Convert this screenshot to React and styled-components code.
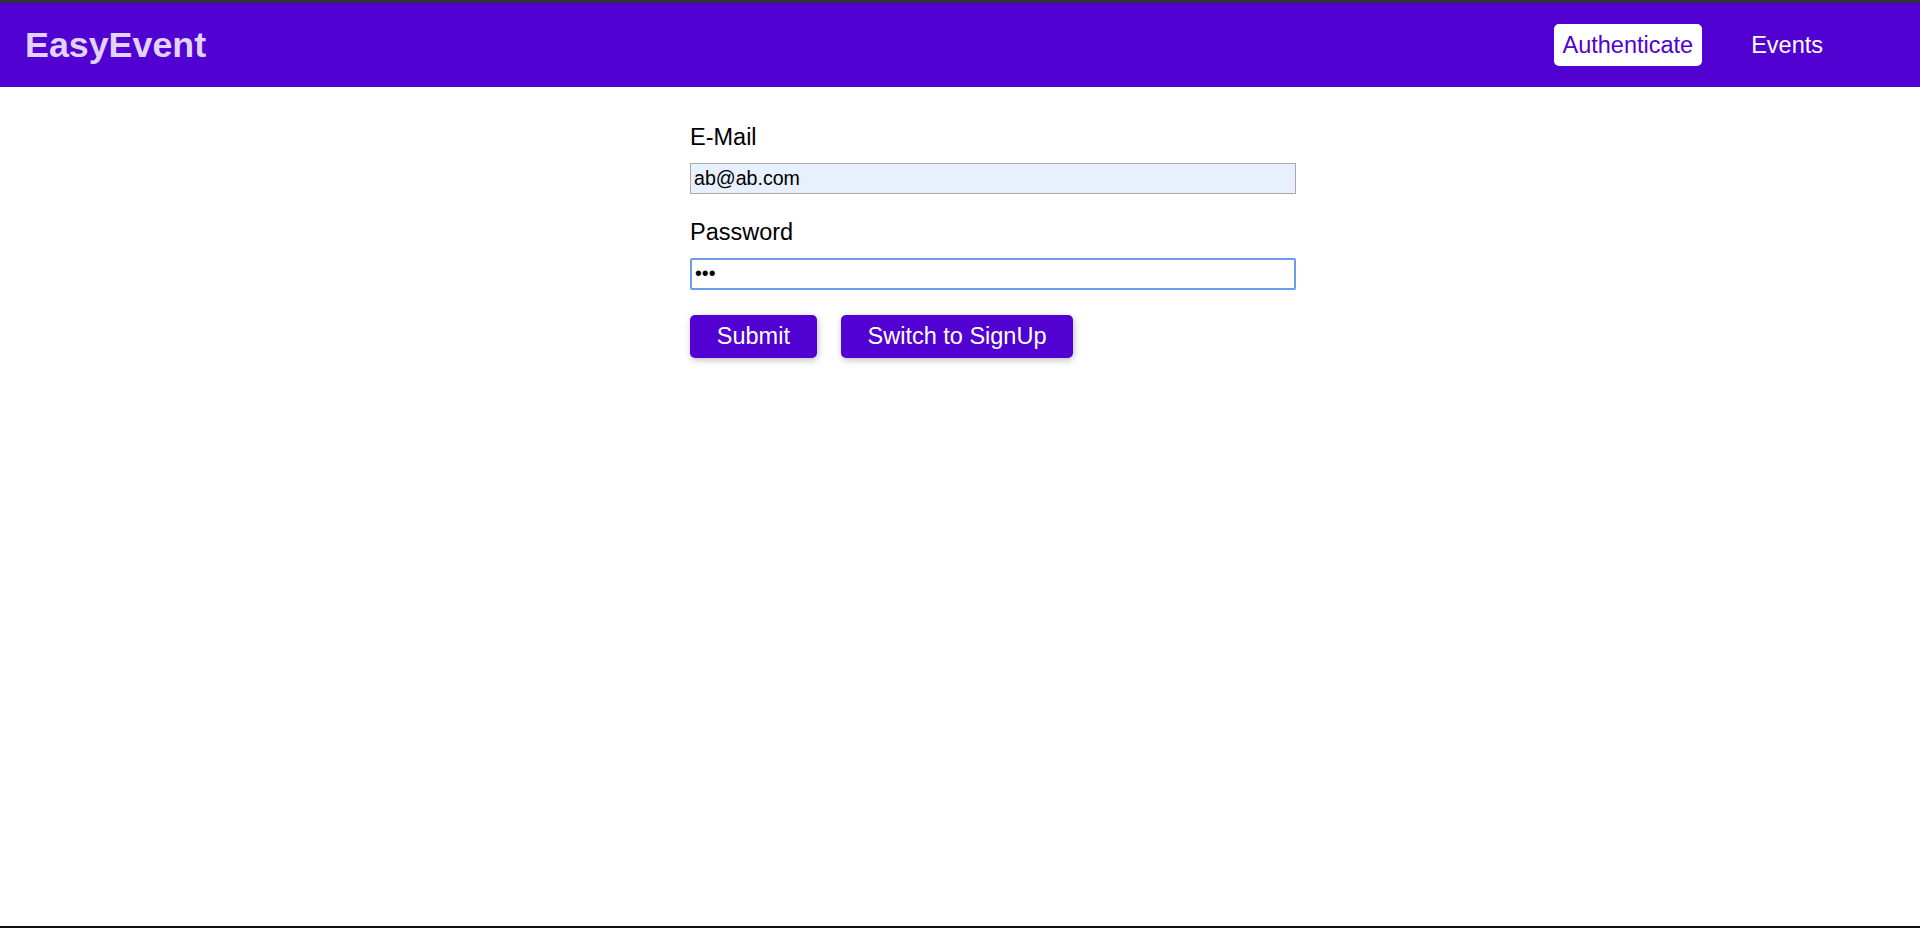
import React, { useState } from "react";
import styled, { createGlobalStyle } from "styled-components";

const GlobalStyle = createGlobalStyle`
  html, body {
    margin: 0;
    padding: 0;
    background: #ffffff;
    font-family: "Liberation Sans", Arial, sans-serif;
  }
  * { box-sizing: border-box; }
`;

const Page = styled.div`
  display: flex;
  flex-direction: column;
  min-height: 928px;
  border-top: 3px solid #333238;
  border-bottom: 2px solid #111111;
`;

const Navigation = styled.header`
  height: 84px;
  display: flex;
  align-items: center;
  justify-content: space-between;
  padding: 0 88px 0 25px;
  background: #5101d1;
`;

const Logo = styled.h1`
  margin: 0;
  font-size: 35.8px;
  font-weight: 700;
  color: #e1d3ff;
`;

const NavList = styled.ul`
  display: flex;
  align-items: center;
  gap: 40px;
  list-style: none;
  margin: 0;
  padding: 0;
`;

const NavLink = styled.a`
  display: block;
  padding: 7.5px 9px;
  border-radius: 5px;
  font-size: 23.5px;
  line-height: 27px;
  text-decoration: none;
  cursor: pointer;
  color: ${(p) => (p.$active ? "#5101d1" : "#ffffff")};
  background: ${(p) => (p.$active ? "#ffffff" : "transparent")};
`;

const Main = styled.main`
  flex: 1;
  padding-top: 37px;
`;

const AuthForm = styled.form`
  width: 606px;
  margin-left: calc(50% - 270px);
`;

const FormControl = styled.div`
  margin-bottom: 24.5px;
`;

const Label = styled.label`
  display: block;
  margin-bottom: 12px;
  font-size: 23.5px;
  line-height: 27px;
  color: #000000;
`;

const Input = styled.input`
  display: block;
  width: 100%;
  height: ${(p) => (p.$focused ? "32.5px" : "31px")};
  margin: 0;
  padding: 0 3px;
  font-family: "Liberation Sans", Arial, sans-serif;
  font-size: 19.6px;
  color: #000000;
  background: ${(p) => (p.$autofill ? "#e8f0fe" : "#ffffff")};
  border: ${(p) => (p.$focused ? "2px solid #6c9cec" : "1.2px solid #a9a9a9")};
  border-radius: ${(p) => (p.$focused ? "2px" : "0")};
  outline: none;
  caret-color: #000000;
`;

const Actions = styled.div`
  display: flex;
  gap: 24px;
`;

const Button = styled.button`
  height: 43px;
  padding: 0 26.8px;
  border: none;
  border-radius: 5px;
  background: #5101d1;
  color: #ffffff;
  font-family: "Liberation Sans", Arial, sans-serif;
  font-size: 23.5px;
  cursor: pointer;
  box-shadow: 1px 2px 7px rgba(0, 0, 0, 0.26);
`;

export default function App() {
  const [email, setEmail] = useState("ab@ab.com");
  const [password, setPassword] = useState("abc");

  return (
    <>
      <GlobalStyle />
      <Page>
        <Navigation>
          <Logo>EasyEvent</Logo>
          <nav>
            <NavList>
              <li>
                <NavLink $active>Authenticate</NavLink>
              </li>
              <li>
                <NavLink>Events</NavLink>
              </li>
            </NavList>
          </nav>
        </Navigation>
        <Main>
          <AuthForm onSubmit={(e) => e.preventDefault()}>
            <FormControl>
              <Label htmlFor="email">E-Mail</Label>
              <Input
                id="email"
                type="email"
                $autofill
                value={email}
                onChange={(e) => setEmail(e.target.value)}
              />
            </FormControl>
            <FormControl>
              <Label htmlFor="password">Password</Label>
              <Input
                id="password"
                type="password"
                $focused
                autoFocus
                value={password}
                onChange={(e) => setPassword(e.target.value)}
              />
            </FormControl>
            <Actions>
              <Button type="submit">Submit</Button>
              <Button type="button">Switch to SignUp</Button>
            </Actions>
          </AuthForm>
        </Main>
      </Page>
    </>
  );
}
